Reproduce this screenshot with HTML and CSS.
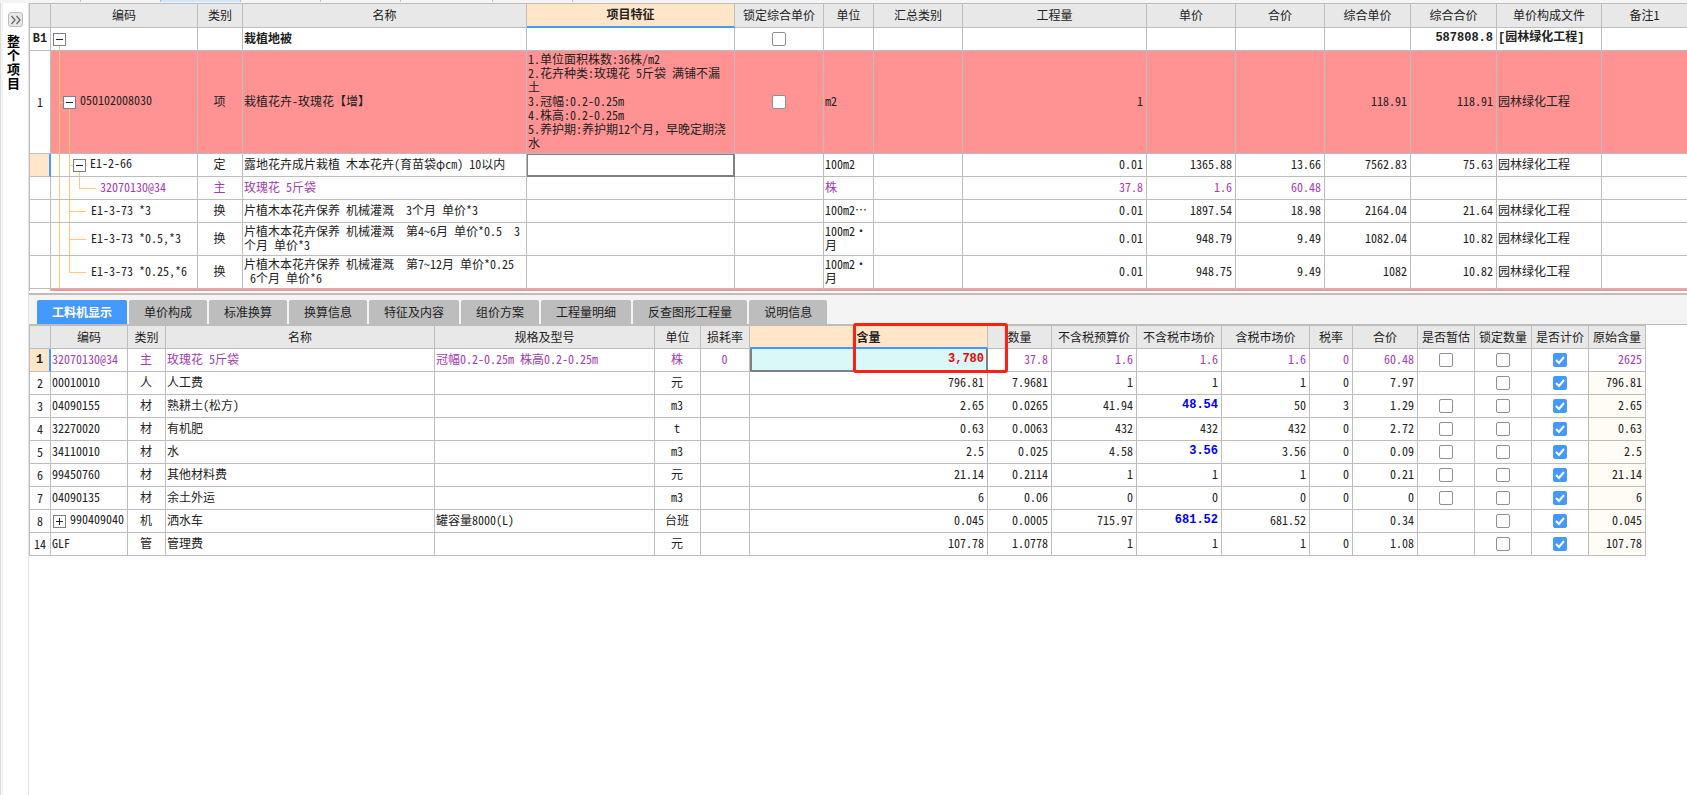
FILE: index.html
```html
<!DOCTYPE html>
<html lang="zh-CN">
<head>
<meta charset="utf-8">
<title>整个项目</title>
<link rel="stylesheet" href="styles.css">
</head>
<body>
<div class="strip"><i></i><i></i><i class="on"></i><i></i><i></i><i class="wide"></i><i></i></div>
<div class="main">
<aside class="rail">
  <button class="expand" aria-label="展开"><svg width="12" height="10" viewBox="0 0 12 10"><path d="M1.5 1L5 5L1.5 9M6.500 1L10 5L6.500 9" fill="none" stroke="#6a6a6a" stroke-width="1.300"/></svg></button>
  <div class="rail-title">整个项目</div>
</aside>
<div class="content">
<table class="grid items">
<colgroup><col class="w21"><col class="w147"><col class="w45"><col><col class="w208"><col class="w89"><col class="w50"><col class="w89"><col class="w184"><col class="w89"><col class="w89"><col class="w86"><col class="w86"><col class="w105"><col class="w85"></colgroup>
<thead><tr><th></th><th>编码</th><th>类别</th><th>名称</th><th class="cur">项目特征</th><th>锁定综合单价</th><th>单位</th><th>汇总类别</th><th>工程量</th><th>单价</th><th>合价</th><th>综合单价</th><th>综合合价</th><th>单价构成文件</th><th>备注1</th></tr></thead>
<tbody>
<tr class="bold"><td class="c wide-num">B1</td><td class="tree t0"><button class="box" aria-label="折叠"></button></td><td></td><td>栽植地被</td><td></td><td class="c"><input type="checkbox" aria-label="锁定综合单价"></td><td></td><td></td><td></td><td></td><td></td><td></td><td class="n wide-num">587808.8</td><td class="wide-num">[园林绿化工程]</td><td></td></tr>
<tr class="pink tall"><td class="c no">1</td><td class="tree t1"><button class="box" aria-label="折叠"></button>050102008030</td><td class="c">项</td><td>栽植花卉-玫瑰花【增】</td><td>1.单位面积株数:36株/m2<br>2.花卉种类:玫瑰花 5斤袋 满铺不漏<br>土<br>3.冠幅:0.2-0.25m<br>4.株高:0.2-0.25m<br>5.养护期:养护期12个月<span class="full">，</span>早晚定期浇<br>水</td><td class="c"><input type="checkbox" aria-label="锁定综合单价"></td><td>m2</td><td></td><td class="n">1</td><td></td><td></td><td class="n">118.91</td><td class="n">118.91</td><td>园林绿化工程</td><td></td></tr>
<tr><td class="no sel"></td><td class="tree t2"><button class="box" aria-label="折叠"></button>E1-2-66</td><td class="c">定</td><td>露地花卉成片栽植 木本花卉(育苗袋<span class="full">φ㎝</span>) 10以内</td><td class="focus"></td><td></td><td>100m2</td><td></td><td class="n">0.01</td><td class="n">1365.88</td><td class="n">13.66</td><td class="n">7562.83</td><td class="n">75.63</td><td>园林绿化工程</td><td></td></tr>
<tr class="purple"><td></td><td class="tree t3">32070130@34</td><td class="c">主</td><td>玫瑰花 5斤袋</td><td></td><td></td><td>株</td><td></td><td class="n">37.8</td><td class="n">1.6</td><td class="n">60.48</td><td></td><td></td><td></td><td></td></tr>
<tr><td></td><td class="tree t4">E1-3-73 *3</td><td class="c">换</td><td>片植木本花卉保养 机械灌溉  3个月 单价*3</td><td></td><td></td><td>100m2<span class="full">…</span></td><td></td><td class="n">0.01</td><td class="n">1897.54</td><td class="n">18.98</td><td class="n">2164.04</td><td class="n">21.64</td><td>园林绿化工程</td><td></td></tr>
<tr class="two"><td></td><td class="tree t4">E1-3-73 *0.5,*3</td><td class="c">换</td><td>片植木本花卉保养 机械灌溉  第4~6月 单价*0.5  3<br>个月 单价*3</td><td></td><td></td><td>100m2<span class="full">・</span><br>月</td><td></td><td class="n">0.01</td><td class="n">948.79</td><td class="n">9.49</td><td class="n">1082.04</td><td class="n">10.82</td><td>园林绿化工程</td><td></td></tr>
<tr class="two"><td></td><td class="tree t5">E1-3-73 *0.25,*6</td><td class="c">换</td><td>片植木本花卉保养 机械灌溉  第7~12月 单价*0.25<br> 6个月 单价*6</td><td></td><td></td><td>100m2<span class="full">・</span><br>月</td><td></td><td class="n">0.01</td><td class="n">948.75</td><td class="n">9.49</td><td class="n">1082</td><td class="n">10.82</td><td>园林绿化工程</td><td></td></tr>
<tr class="pink peek"><td class="no"></td><td></td><td></td><td></td><td></td><td></td><td></td><td></td><td></td><td></td><td></td><td></td><td></td><td></td><td></td></tr>
</tbody>
</table>
<section class="detail">
<nav class="tabs"><button class="active">工料机显示</button><button>单价构成</button><button>标准换算</button><button>换算信息</button><button>特征及内容</button><button>组价方案</button><button>工程量明细</button><button>反查图形工程量</button><button>说明信息</button></nav>
<div class="sheet">
<table class="grid parts">
<colgroup><col class="w21"><col class="w77"><col class="w38"><col><col class="w220"><col class="w46"><col class="w49"><col class="w238"><col class="w64"><col class="w85"><col class="w85"><col class="w88"><col class="w43"><col class="w65"><col class="w57"><col class="w57"><col class="w57"><col class="w57"></colgroup>
<thead><tr><th></th><th>编码</th><th>类别</th><th>名称</th><th>规格及型号</th><th>单位</th><th>损耗率</th><th class="cur marked">含量<span class="mark"></span></th><th>数量</th><th>不含税预算价</th><th>不含税市场价</th><th>含税市场价</th><th>税率</th><th>合价</th><th>是否暂估</th><th>锁定数量</th><th>是否计价</th><th>原始含量</th></tr></thead>
<tbody>
<tr class="purple"><td class="c sel strong wide-num">1</td><td>32070130@34</td><td class="c">主</td><td>玫瑰花 5斤袋</td><td>冠幅0.2-0.25m 株高0.2-0.25m</td><td class="c">株</td><td class="c">0</td><td class="n edit wide-num">3,780</td><td class="n">37.8</td><td class="n">1.6</td><td class="n">1.6</td><td class="n">1.6</td><td class="n">0</td><td class="n">60.48</td><td class="c"><input type="checkbox" aria-label="是否暂估"></td><td class="c"><input type="checkbox" aria-label="锁定数量"></td><td class="c"><input type="checkbox" aria-label="是否计价" checked></td><td class="n">2625</td></tr>
<tr><td class="c">2</td><td>00010010</td><td class="c">人</td><td>人工费</td><td></td><td class="c">元</td><td></td><td class="n">796.81</td><td class="n">7.9681</td><td class="n">1</td><td class="n">1</td><td class="n">1</td><td class="n">0</td><td class="n">7.97</td><td></td><td class="c"><input type="checkbox" aria-label="锁定数量"></td><td class="c"><input type="checkbox" aria-label="是否计价" checked></td><td class="n orig">796.81</td></tr>
<tr><td class="c">3</td><td>04090155</td><td class="c">材</td><td>熟耕土(松方)</td><td></td><td class="c">m3</td><td></td><td class="n">2.65</td><td class="n">0.0265</td><td class="n">41.94</td><td class="n blue wide-num">48.54</td><td class="n">50</td><td class="n">3</td><td class="n">1.29</td><td class="c"><input type="checkbox" aria-label="是否暂估"></td><td class="c"><input type="checkbox" aria-label="锁定数量"></td><td class="c"><input type="checkbox" aria-label="是否计价" checked></td><td class="n orig">2.65</td></tr>
<tr><td class="c">4</td><td>32270020</td><td class="c">材</td><td>有机肥</td><td></td><td class="c">t</td><td></td><td class="n">0.63</td><td class="n">0.0063</td><td class="n">432</td><td class="n">432</td><td class="n">432</td><td class="n">0</td><td class="n">2.72</td><td class="c"><input type="checkbox" aria-label="是否暂估"></td><td class="c"><input type="checkbox" aria-label="锁定数量"></td><td class="c"><input type="checkbox" aria-label="是否计价" checked></td><td class="n orig">0.63</td></tr>
<tr><td class="c">5</td><td>34110010</td><td class="c">材</td><td>水</td><td></td><td class="c">m3</td><td></td><td class="n">2.5</td><td class="n">0.025</td><td class="n">4.58</td><td class="n blue wide-num">3.56</td><td class="n">3.56</td><td class="n">0</td><td class="n">0.09</td><td class="c"><input type="checkbox" aria-label="是否暂估"></td><td class="c"><input type="checkbox" aria-label="锁定数量"></td><td class="c"><input type="checkbox" aria-label="是否计价" checked></td><td class="n orig">2.5</td></tr>
<tr><td class="c">6</td><td>99450760</td><td class="c">材</td><td>其他材料费</td><td></td><td class="c">元</td><td></td><td class="n">21.14</td><td class="n">0.2114</td><td class="n">1</td><td class="n">1</td><td class="n">1</td><td class="n">0</td><td class="n">0.21</td><td class="c"><input type="checkbox" aria-label="是否暂估"></td><td class="c"><input type="checkbox" aria-label="锁定数量"></td><td class="c"><input type="checkbox" aria-label="是否计价" checked></td><td class="n orig">21.14</td></tr>
<tr><td class="c">7</td><td>04090135</td><td class="c">材</td><td>余土外运</td><td></td><td class="c">m3</td><td></td><td class="n">6</td><td class="n">0.06</td><td class="n">0</td><td class="n">0</td><td class="n">0</td><td class="n">0</td><td class="n">0</td><td class="c"><input type="checkbox" aria-label="是否暂估"></td><td class="c"><input type="checkbox" aria-label="锁定数量"></td><td class="c"><input type="checkbox" aria-label="是否计价" checked></td><td class="n orig">6</td></tr>
<tr><td class="c">8</td><td class="lead"><button class="box plus" aria-label="展开"></button>990409040</td><td class="c">机</td><td>洒水车</td><td>罐容量8000(L)</td><td class="c">台班</td><td></td><td class="n">0.045</td><td class="n">0.0005</td><td class="n">715.97</td><td class="n blue wide-num">681.52</td><td class="n">681.52</td><td></td><td class="n">0.34</td><td></td><td class="c"><input type="checkbox" aria-label="锁定数量"></td><td class="c"><input type="checkbox" aria-label="是否计价" checked></td><td class="n orig">0.045</td></tr>
<tr><td class="c">14</td><td>GLF</td><td class="c">管</td><td>管理费</td><td></td><td class="c">元</td><td></td><td class="n">107.78</td><td class="n">1.0778</td><td class="n">1</td><td class="n">1</td><td class="n">1</td><td class="n">0</td><td class="n">1.08</td><td></td><td class="c"><input type="checkbox" aria-label="锁定数量"></td><td class="c"><input type="checkbox" aria-label="是否计价" checked></td><td class="n orig">107.78</td></tr>
</tbody>
</table>
</div>
</section>
</div>
</div>
</body>
</html>
```
FILE: styles.css
```css
* { box-sizing: border-box; }
body {
  margin: 0;
  min-height: 100vh;
  display: flex;
  flex-direction: column;
  background: #fff;
  color: #222;
  font: 12px/14px "Noto Sans CJK SC", sans-serif;
  font-feature-settings: "hwid";
  overflow-x: hidden;
}
button { margin: 0; padding: 0; border: 0; font: inherit; font-feature-settings: inherit; color: inherit; }

.strip { display: flex; height: 3px; padding-bottom: 1px; background: #f4f4f4; }
.strip i { width: 80px; border-right: 1px solid #bdbdbd; }
.strip i:first-child { width: 81px; }
.strip .on { background: #cfe7fb; }
.strip .wide { width: 92px; }

.main { flex: 1; display: flex; }
.rail {
  flex: none;
  width: 29px;
  padding: 9px 5px 0 5px;
  border-left: 1px solid #dcdcdc;
  border-right: 1px solid #e4e4e4;
  box-shadow: inset 2px 0 #f4f4f4;
}
.expand {
  display: flex;
  align-items: center;
  justify-content: center;
  width: 15px;
  height: 15px;
  margin-left: 2px;
  border: 1px solid #bdbdbd;
  border-radius: 3px;
  background: #e8e8e8;
}
.rail-title { width: 14px; margin: 7px 0 0 1px; font-size: 13px; font-weight: 700; color: #000; word-break: break-all; }
.content { flex: 1; min-width: 0; display: flex; flex-direction: column; }

.grid { width: 100%; table-layout: fixed; border-collapse: separate; border-spacing: 0; border-top: 1px solid #bdbdbd; }
.grid th, .grid td {
  height: 23px;
  padding: 0 2px 2px 1px;
  border-right: 1px solid #bdbdbd;
  border-bottom: 1px solid #bdbdbd;
  text-align: left;
  white-space: pre;
  vertical-align: middle;
}
.grid th { padding: 0; background: #e8e8e8; font-weight: 400; text-align: center; }
.grid th:first-child, .grid td:first-child { border-left: 1px solid #bdbdbd; padding: 0; }
.items th { height: 24px; }
.grid.items th { padding-bottom: 2px; }
.items td:last-child, .items th:last-child { border-right: 0; }
.grid .c { text-align: center; }
.grid .n { text-align: right; padding-right: 3px; }
.grid th.cur { background: #ffe6c8; border-bottom: 2px solid #4499ff; font-weight: 700; }
.grid td.sel { background: #ffe6c8; border-right: 2px solid #4499ff; }
.grid .bold td { font-weight: 700; }
.strong, .blue { font-weight: 700; }
.wide-num { font-family: "Liberation Mono", "Noto Sans CJK SC", monospace; }
.full { font-feature-settings: normal; }
.purple { color: #a33cb4; }
.purple .strong { color: #222; }
.blue { color: #0000f0; }
.orig { background: #fffbf5; }
.pink td { background-color: #ff9292; }
.pink td.no { background-color: #fff; }
.grid .tall td { height: 103px; }
.grid .two td { height: 33px; }
.grid .peek td { height: 2px; border-bottom: 0; padding: 0; font-size: 0; line-height: 0; }
.grid td.focus { box-shadow: inset 0 0 0 1px #808080; border-color: #808080; }
.grid td.edit {
  border: 2px solid #808080;
  border-top: 0;
  background: #dbf8f8;
  color: #f00000;
  font-weight: 700;
  padding-right: 2px;
}

.grid .tree { padding-bottom: 0; }
.tree { --g: linear-gradient(#ffc878, #ffc878); background-image: var(--g), var(--g), var(--g), var(--g); background-repeat: no-repeat; }
.grid .t0 { padding-left: 2px; background-size: 1px 100%, 0 0, 0 0, 0 0; background-position: 8px 12px, 0 0, 0 0, 0 0; }
.grid .t1 { padding-left: 12px; background-size: 1px 100%, 4px 1px, 1px 50px, 0 0; background-position: 8px 0, 8px 50%, 18px 100%, 0 0; }
.grid .t2 { padding-left: 22px; background-size: 1px 100%, 1px 100%, 4px 1px, 1px 100%; background-position: 8px 0, 18px 0, 18px 50%, 28px 12px; }
.grid .t3 { padding-left: 49px; background-size: 1px 100%, 1px 100%, 1px 50%, 17px 1px; background-position: 8px 0, 18px 0, 28px 0, 28px 50%; }
.grid .t4 { padding-left: 40px; background-size: 1px 100%, 1px 100%, 17px 1px, 0 0; background-position: 8px 0, 18px 0, 18px 50%, 0 0; }
.grid .t5 { padding-left: 40px; background-size: 1px 100%, 1px 50%, 17px 1px, 0 0; background-position: 8px 0, 18px 0, 18px 50%, 0 0; }
.grid .t0, .grid .t1, .grid .t2, .grid .t3, .grid .t4, .grid .t5 { padding-bottom: 2px; }
.grid .lead { padding-left: 2px; }
.box {
  --l: linear-gradient(#222, #222);
  width: 13px;
  height: 13px;
  margin-right: 4px;
  border: 1px solid #808080;
  background: var(--l) center / 7px 1px no-repeat, #fff;
  vertical-align: middle;
}
.plus { background: var(--l) center / 7px 1px no-repeat, var(--l) center / 1px 7px no-repeat, #fff; }

input[type="checkbox"] {
  appearance: none;
  display: block;
  width: 14px;
  height: 14px;
  margin: 1px auto 0;
  border: 1px solid #909090;
  border-radius: 2px;
  background: #fff;
}
input[type="checkbox"]:checked {
  border-color: #4499ff;
  background: #4499ff url("data:image/svg+xml,%3Csvg xmlns='http://www.w3.org/2000/svg' viewBox='0 0 12 12'%3E%3Cpath d='M2 6L5 9L10 3' fill='none' stroke='white' stroke-width='2'/%3E%3C/svg%3E") center / 12px 12px no-repeat;
}

.detail { flex: 1; margin-top: 2px; border-top: 2px solid #bdbdbd; background: #f4f4f4; display: flex; flex-direction: column; }
.tabs { display: flex; gap: 2px; padding: 5px 8px 0; }
.tabs button { height: 24px; padding: 0 15px; border-radius: 2px 2px 0 0; background: #bdbdbd; color: #222; white-space: nowrap; }
.tabs .active { background: #4499ff; color: #fff; font-weight: 700; }
.sheet { flex: 1; padding-right: 41px; border-top: 1px solid #bdbdbd; background: #fff; }
.marked { position: relative; }
.mark { position: absolute; z-index: 2; top: -3px; right: -21px; width: 155px; height: 50px; border: 3px solid #ff2010; border-radius: 3px; }

.w21 { width: 22px; } .w38 { width: 38px; } .w43 { width: 43px; } .w45 { width: 45px; }
.w46 { width: 46px; } .w49 { width: 49px; } .w50 { width: 50px; } .w57 { width: 57px; }
.w64 { width: 64px; } .w65 { width: 65px; } .w77 { width: 77px; } .w85 { width: 85px; }
.w86 { width: 86px; } .w88 { width: 88px; } .w89 { width: 89px; } .w105 { width: 105px; }
.w147 { width: 147px; } .w184 { width: 184px; } .w208 { width: 208px; } .w220 { width: 220px; } .w238 { width: 238px; }
```
